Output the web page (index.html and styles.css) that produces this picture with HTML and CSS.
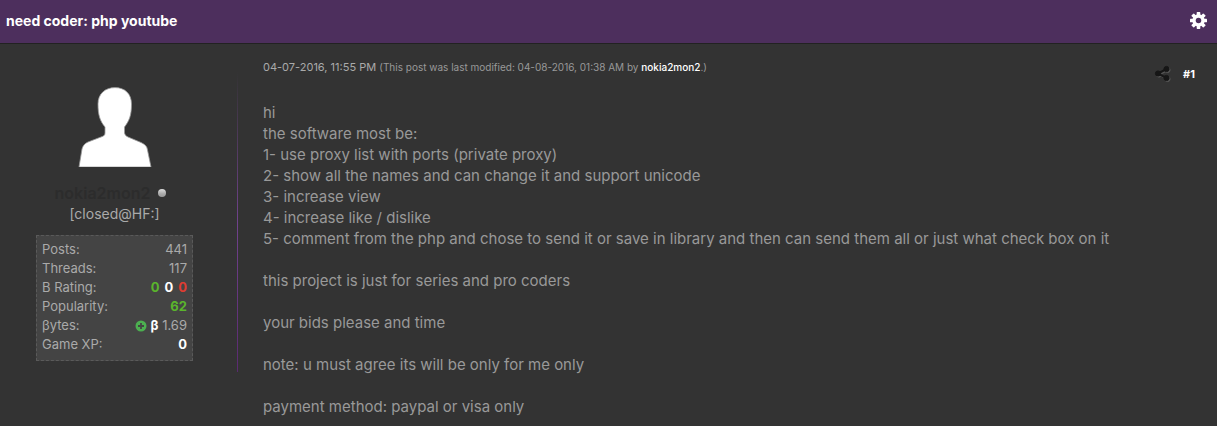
FILE: index.html
```html
<!DOCTYPE html>
<html lang="en">
<head>
<meta charset="utf-8">
<title>need coder: php youtube</title>
<link rel="stylesheet" href="styles.css">
</head>
<body>
<header class="thread-bar">
  <h1 class="thread-title">need coder: php youtube</h1>
  <button class="icon-button" type="button" aria-label="Thread options">
    <svg class="gear" viewBox="0 0 16 16" aria-hidden="true">
      <g fill="#fff">
        <rect x="6.3" y="0" width="3.4" height="16" rx=".6"/>
        <rect x="6.3" y="0" width="3.4" height="16" rx=".6" transform="rotate(45 8 8)"/>
        <rect x="6.3" y="0" width="3.4" height="16" rx=".6" transform="rotate(90 8 8)"/>
        <rect x="6.3" y="0" width="3.4" height="16" rx=".6" transform="rotate(135 8 8)"/>
        <circle cx="8" cy="8" r="5.800"/>
      </g>
      <circle cx="8" cy="8" r="2.600" fill="#4d2f5d"/>
    </svg>
  </button>
</header>
<article class="post">
  <aside class="author">
    <svg class="avatar" viewBox="0 0 74 80" role="img" aria-label="Avatar">
      <path d="M37 .6C47 .6 53.500 7 53.500 17C53.500 29 51 34 46.500 40V46C47 48 48 49 50 50L63 55.500C67 57.500 69 59 69.500 63L73 80H1L4 62C5 59 6 57 10 55L23 50C26 49 27 48 27 46V40C22 34 20 28 20 17C20 7 27 .6 37 .6Z" fill="#fff" stroke="#999" stroke-width=".8"/>
    </svg>
    <div class="author-name">
      <a class="author-link" href="#">nokia2mon2</a>
      <span class="status" role="img" aria-label="Offline"></span>
    </div>
    <div class="author-title">[closed@HF:]</div>
    <table class="stats">
      <tr><th scope="row">Posts:</th><td>441</td></tr>
      <tr><th scope="row">Threads:</th><td>117</td></tr>
      <tr><th scope="row">B Rating:</th><td><b class="rating good">0</b><b class="rating light">0</b><b class="rating bad">0</b></td></tr>
      <tr><th scope="row">Popularity:</th><td><b class="good">62</b></td></tr>
      <tr><th scope="row">βytes:</th><td><svg class="plus" viewBox="0 0 12 12" aria-hidden="true"><circle cx="6" cy="6" r="5.500" fill="#4caf50"/><path d="M6 3V9M3 6H9" stroke="#444" stroke-width="1.800"/></svg> <b class="light">β</b> 1.69</td></tr>
      <tr><th scope="row">Game XP:</th><td><b class="light">0</b></td></tr>
    </table>
  </aside>
  <div class="divider"></div>
  <section class="content">
    <div class="post-head">
      <p class="post-date">04-07-2016, 11:55 PM <small class="edited">(This post was last modified: 04-08-2016, 01:38 AM by <a class="editor" href="#">nokia2mon2</a>.)</small></p>
      <div class="post-tools">
        <button class="icon-button" type="button" aria-label="Share">
          <svg class="share" viewBox="0 0 18 18" aria-hidden="true">
            <g transform="translate(1 1)" fill="#555" stroke="#555"><path d="M12.500 4L4 8.500L12.500 13" fill="none" stroke-width="2"/><circle cx="12.500" cy="4" r="2.600"/><circle cx="4" cy="8.500" r="2.600"/><circle cx="12.500" cy="13" r="2.600"/></g>
            <g fill="#161616" stroke="#161616"><path d="M12.500 4L4 8.500L12.500 13" fill="none" stroke-width="2"/><circle cx="12.500" cy="4" r="2.600"/><circle cx="4" cy="8.500" r="2.600"/><circle cx="12.500" cy="13" r="2.600"/></g>
          </svg>
        </button>
        <a class="post-number" href="#">#1</a>
      </div>
    </div>
    <div class="post-body">hi<br>
the software most be:<br>
1- use proxy list with ports (private proxy)<br>
2- show all the names and can change it and support unicode<br>
3- increase view<br>
4- increase like / dislike<br>
5- comment from the php and chose to send it or save in library and then can send them all or just what check box on it<br>
<br>
this project is just for series and pro coders<br>
<br>
your bids please and time<br>
<br>
note: u must agree its will be only for me only<br>
<br>
payment method: paypal or visa only</div>
  </section>
</article>
</body>
</html>
```
FILE: styles.css
```css
* { box-sizing: border-box; }
body {
  margin: 0;
  background: #333;
  color: #999;
  font-family: Inter, "Liberation Sans", sans-serif;
  font-size: 14px;
}
a { color: #fff; text-decoration: none; }
.icon-button {
  display: flex;
  padding: 0;
  border: 0;
  background: none;
  cursor: pointer;
}
.thread-bar {
  display: flex;
  align-items: center;
  justify-content: space-between;
  height: 44px;
  padding: 0 10px 2px 6px;
  background: #4d2f5d;
  border-bottom: 1px solid #222;
}
.thread-title {
  margin: 0;
  color: #fff;
  font-size: 14px;
  font-weight: 700;
}
.gear { width: 17px; height: 17px; }
.post { display: flex; align-items: flex-start; }
.author {
  display: flex;
  flex: none;
  flex-direction: column;
  align-items: center;
  width: 237px;
  padding: 43px 8px 0 0;
}
.avatar { width: 74px; height: 80px; }
.author-name {
  display: flex;
  align-items: center;
  gap: 8px;
  margin-top: 16px;
  padding-right: 8px;
  line-height: 20px;
}
.author-link { color: #2c2c2c; font-size: 16px; font-weight: 600; }
.status {
  width: 8px;
  height: 8px;
  border-radius: 50%;
  background: linear-gradient(#ddd, #aaa 60%, #999);
}
.author-title { line-height: 22px; color: #aaa; }
.stats {
  width: 157px;
  margin: 10px 0 0;
  padding: 4px 5px 6px;
  border: 1px dashed #5a5a5a;
  border-spacing: 0;
  background: #444;
  color: #aaa;
  font-size: 13px;
  line-height: 19px;
}
.stats th { padding: 0; font-weight: 400; text-align: left; }
.stats td { padding: 0; text-align: right; white-space: nowrap; }
.rating + .rating { margin-left: 5px; }
.good { color: #5ab52c; }
.bad { color: #e03c31; }
.light { color: #fff; }
.plus { width: 12px; height: 12px; vertical-align: -2px; }
.divider {
  flex: none;
  width: 1px;
  height: 300px;
  margin-top: 28px;
  background: linear-gradient(#333, #70428c 50%, #5a2a70);
}
.content { flex: 1; min-width: 0; padding: 14px 22px 8px 25px; }
.post-head { display: flex; justify-content: space-between; }
.post-date { margin: 0; color: #aaa; font-size: 11px; line-height: 18px; }
.edited { color: #999; font-size: 10px; }
.editor { font-weight: 500; }
.post-tools { display: flex; align-items: center; gap: 11px; padding-top: 7px; }
.share { width: 18px; height: 18px; }
.post-number { font-size: 11px; font-weight: 700; }
.post-body {
  margin-top: 19px;
  font-size: 15px;
  line-height: 21px;
}
```
